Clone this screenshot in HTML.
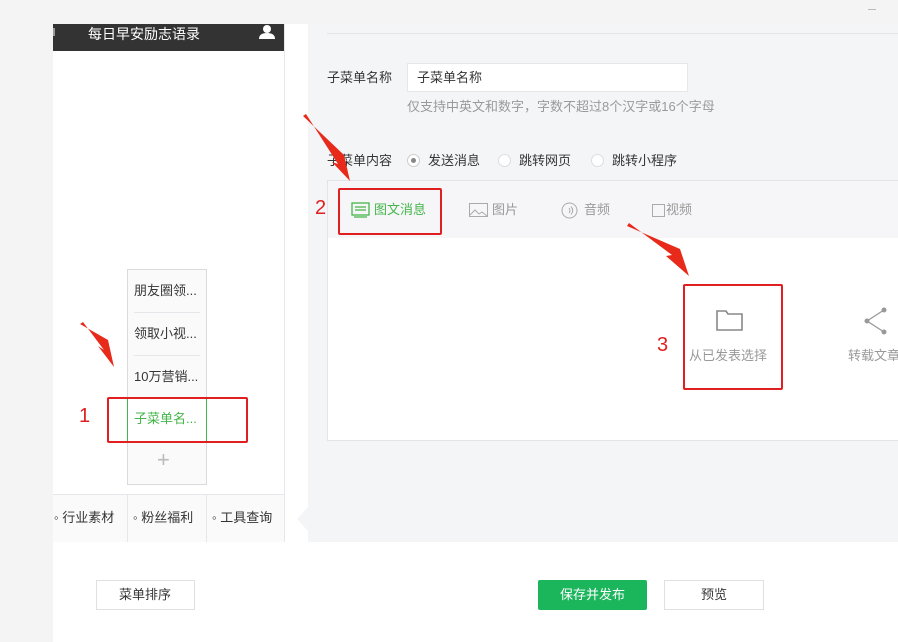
<!DOCTYPE html>
<html><head><meta charset="utf-8"><style>
*{margin:0;padding:0;box-sizing:border-box}
body{width:898px;height:642px;overflow:hidden;background:#f4f4f5;font-family:"Liberation Sans","Noto Sans CJK SC",sans-serif;font-size:13px;color:#353535;position:relative}
.a{position:absolute}
.t{position:absolute;white-space:nowrap;margin-top:-3px}
</style></head><body>
<div class="a" style="left:53px;top:24px;width:255px;height:618px;background:#fff"></div>
<div class="a" style="left:53px;top:542px;width:845px;height:100px;background:#fff"></div>
<div class="a" style="left:308px;top:24px;width:590px;height:518px;background:#f4f5f7"></div>
<div class="a" style="left:284px;top:24px;width:1px;height:518px;background:#e7e7eb"></div>
<div class="a" style="left:868px;top:9px;width:8px;height:1px;background:#bbb"></div>
<div class="a" style="left:53px;top:24px;width:231px;height:27px;background:#333"></div>
<div class="t" style="left:88px;top:27px;color:#fff;font-size:14px">每日早安励志语录</div>
<svg class="a" style="left:258px;top:24px" width="18" height="16"><circle cx="9" cy="5" r="4" fill="#fff"/><path d="M1 15 Q1 9 9 9 Q17 9 17 15Z" fill="#fff"/></svg>
<div class="a" style="left:53px;top:28px;width:2px;height:8px;background:#999"></div>
<div class="a" style="left:127px;top:269px;width:80px;height:216px;border:1px solid #d9dadc;background:#fafafa"></div>
<div class="t" style="left:134px;top:283px">朋友圈领...</div>
<div class="a" style="left:134px;top:312px;width:66px;height:1px;background:#e7e7eb"></div>
<div class="t" style="left:134px;top:326px">领取小视...</div>
<div class="a" style="left:134px;top:355px;width:66px;height:1px;background:#e7e7eb"></div>
<div class="t" style="left:134px;top:369px">10万营销...</div>
<div class="a" style="left:127px;top:398px;width:80px;height:44px;border:1px solid #44b549;background:#fff"></div>
<div class="t" style="left:134px;top:411px;color:#44b549">子菜单名...</div>
<div class="t" style="left:157px;top:452px;color:#bbb;font-size:22px;line-height:22px">+</div>
<div class="a" style="left:53px;top:494px;width:231px;height:48px;background:#fafafa;border-top:1px solid #e7e7eb"></div>
<div class="a" style="left:127px;top:495px;width:1px;height:47px;background:#e7e7eb"></div>
<div class="a" style="left:206px;top:495px;width:1px;height:47px;background:#e7e7eb"></div>
<div class="t" style="left:54px;top:510px;color:#333">◦ 行业素材</div>
<div class="t" style="left:133px;top:510px;color:#333">◦ 粉丝福利</div>
<div class="t" style="left:212px;top:510px;color:#333">◦ 工具查询</div>
<div class="a" style="left:327px;top:33px;width:571px;height:1px;background:#e4e4e8"></div>
<div class="t" style="left:327px;top:70px">子菜单名称</div>
<div class="a" style="left:407px;top:63px;width:281px;height:29px;background:#fff;border:1px solid #e7e7eb"></div>
<div class="t" style="left:417px;top:70px">子菜单名称</div>
<div class="t" style="left:407px;top:99px;color:#9a9a9a">仅支持中英文和数字，字数不超过8个汉字或16个字母</div>
<div class="t" style="left:327px;top:153px">子菜单内容</div>
<div class="a" style="left:407px;top:154px;width:13px;height:13px;border-radius:50%;border:1px solid #ccc;background:#fff"></div>
<div class="a" style="left:411px;top:158px;width:5px;height:5px;border-radius:50%;background:#888"></div>
<div class="t" style="left:428px;top:153px">发送消息</div>
<div class="a" style="left:498px;top:154px;width:13px;height:13px;border-radius:50%;border:1px solid #ddd;background:#fff"></div>
<div class="t" style="left:519px;top:153px">跳转网页</div>
<div class="a" style="left:591px;top:154px;width:13px;height:13px;border-radius:50%;border:1px solid #ddd;background:#fff"></div>
<div class="t" style="left:612px;top:153px">跳转小程序</div>
<div class="a" style="left:327px;top:180px;width:580px;height:261px;background:#fff;border:1px solid #e4e4e8"></div>
<div class="a" style="left:328px;top:181px;width:570px;height:57px;background:#f6f6f8"></div>
<svg class="a" style="left:351px;top:202px" width="20" height="16"><rect x="1" y="1" width="17" height="12" fill="none" stroke="#44b549" stroke-width="1.3"/><path d="M4 5h11M4 8h11M3 15h13" stroke="#44b549" stroke-width="1.2"/></svg>
<div class="t" style="left:374px;top:202px;color:#44b549">图文消息</div>
<svg class="a" style="left:469px;top:203px" width="19" height="15"><rect x="0.5" y="0.5" width="18" height="13" fill="none" stroke="#aaa"/><path d="M1 12l5-5 4 4 3-2 5 4" fill="none" stroke="#aaa"/></svg>
<div class="t" style="left:492px;top:202px;color:#999">图片</div>
<svg class="a" style="left:561px;top:202px" width="17" height="17"><circle cx="8.5" cy="8.5" r="7.5" fill="none" stroke="#aaa"/><path d="M8 6q2 2.5 0 5M10 4.5q3.5 4 0 8" fill="none" stroke="#aaa"/></svg>
<div class="t" style="left:584px;top:202px;color:#999">音频</div>
<div class="a" style="left:652px;top:204px;width:13px;height:13px;border:1px solid #aaa"></div>
<div class="t" style="left:666px;top:202px;color:#999">视频</div>
<svg class="a" style="left:716px;top:309px" width="28" height="22"><path d="M1 2h9l2 3h14v16H1Z" fill="none" stroke="#888" stroke-width="1.6"/></svg>
<div class="t" style="left:689px;top:348px;color:#999">从已发表选择</div>
<svg class="a" style="left:862px;top:306px" width="26" height="30"><path d="M22 4L5 15l17 11" fill="none" stroke="#999" stroke-width="1.3"/><circle cx="22" cy="4" r="2.5" fill="#999"/><circle cx="5" cy="15" r="2.5" fill="#999"/><circle cx="22" cy="26" r="2.5" fill="#999"/></svg>
<div class="t" style="left:848px;top:348px;color:#999">转载文章</div>
<svg class="a" style="left:296px;top:506px" width="14" height="26"><path d="M13 0L1 13 13 26Z" fill="#f4f5f7"/></svg>
<div class="a" style="left:96px;top:580px;width:99px;height:30px;border:1px solid #e0e0e0;background:#fff"></div>
<div class="t" style="left:119px;top:587px">菜单排序</div>
<div class="a" style="left:538px;top:580px;width:109px;height:30px;border-radius:2px;background:#1bb55c"></div>
<div class="t" style="left:560px;top:587px;color:#fff">保存并发布</div>
<div class="a" style="left:664px;top:580px;width:100px;height:30px;border:1px solid #e0e0e0;background:#fff"></div>
<div class="t" style="left:701px;top:587px">预览</div>
<div class="a" style="left:107px;top:397px;width:141px;height:46px;border:2px solid #e02020;border-radius:2px"></div>
<div class="t" style="left:79px;top:408px;color:#e02020;font-size:20px">1</div>
<div class="a" style="left:338px;top:188px;width:104px;height:47px;border:2px solid #e02020;border-radius:2px"></div>
<div class="t" style="left:315px;top:200px;color:#e02020;font-size:20px">2</div>
<div class="a" style="left:683px;top:284px;width:100px;height:106px;border:2px solid #e02020;border-radius:2px"></div>
<div class="t" style="left:657px;top:337px;color:#e02020;font-size:20px">3</div>
<svg class="a" style="left:0;top:0" width="898" height="642">
<g fill="#e82a1a">
<path d="M80 324L83 322L104 350L98 346L114 367L108 340Z"/>
<path d="M303 116L306 114L338 164L332 162L350 181L344 155Z"/>
<path d="M627 226L629 223L672 255L666 256L689 276L680 249Z"/>
</g></svg>
</body></html>
